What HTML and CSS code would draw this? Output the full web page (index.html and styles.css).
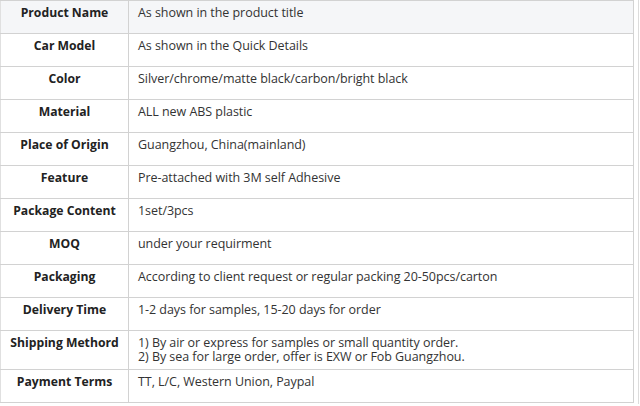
FILE: index.html
```html
<!DOCTYPE html>
<html>
<head>
<meta charset="utf-8">
<link rel="stylesheet" href="styles.css">
</head>
<body>
<div class="wrap">
<table class="spec">
  <tr class="first"><th>Product Name</th><td>As shown in the product title</td></tr>
  <tr><th>Car Model</th><td>As shown in the Quick Details</td></tr>
  <tr><th>Color</th><td>Silver/chrome/matte black/carbon/bright black</td></tr>
  <tr><th>Material</th><td>ALL new ABS plastic</td></tr>
  <tr><th>Place of Origin</th><td>Guangzhou, China(mainland)</td></tr>
  <tr><th>Feature</th><td>Pre-attached with 3M self Adhesive</td></tr>
  <tr><th>Package Content</th><td>1set/3pcs</td></tr>
  <tr><th>MOQ</th><td>under your requirment</td></tr>
  <tr><th>Packaging</th><td>According to client request or regular packing 20-50pcs/carton</td></tr>
  <tr><th>Delivery Time</th><td>1-2 days for samples, 15-20 days for order</td></tr>
  <tr class="tall"><th>Shipping Methord</th><td>1) By air or express for samples or small quantity order.<br>2) By sea for large order, offer is EXW or Fob Guangzhou.</td></tr>
  <tr><th>Payment Terms</th><td>TT, L/C, Western Union, Paypal</td></tr>
</table>
</div>
</body>
</html>
```
FILE: styles.css
```css
html, body {
  margin: 0;
  padding: 0;
  background: #fff;
}
.wrap {
  width: 639px;
  height: 404px;
  border-right: 1px solid #dcdcdc;
  box-sizing: border-box;
}
.spec {
  width: 634px;
  border-collapse: collapse;
  font-family: "Open Sans", "Noto Sans", sans-serif;
  font-size: 12.5px;
  color: #333;
}
.spec th, .spec td {
  border: 1px solid #d2d2d2;
  height: 33px;
  padding: 5px 0 0 0;
  box-sizing: border-box;
  vertical-align: top;
  line-height: 14px;
}
.spec th {
  width: 128px;
  font-size: 12.2px;
  font-weight: 700;
  color: #222;
  text-align: center;
  border-left-color: #e0e0e0;
}
.spec td {
  padding-left: 9px;
  text-align: left;
  letter-spacing: -0.05px;
}
.spec tr.first th, .spec tr.first td { background: #f5f6f8; }
.spec tr.tall th, .spec tr.tall td { height: 39px; }
```
